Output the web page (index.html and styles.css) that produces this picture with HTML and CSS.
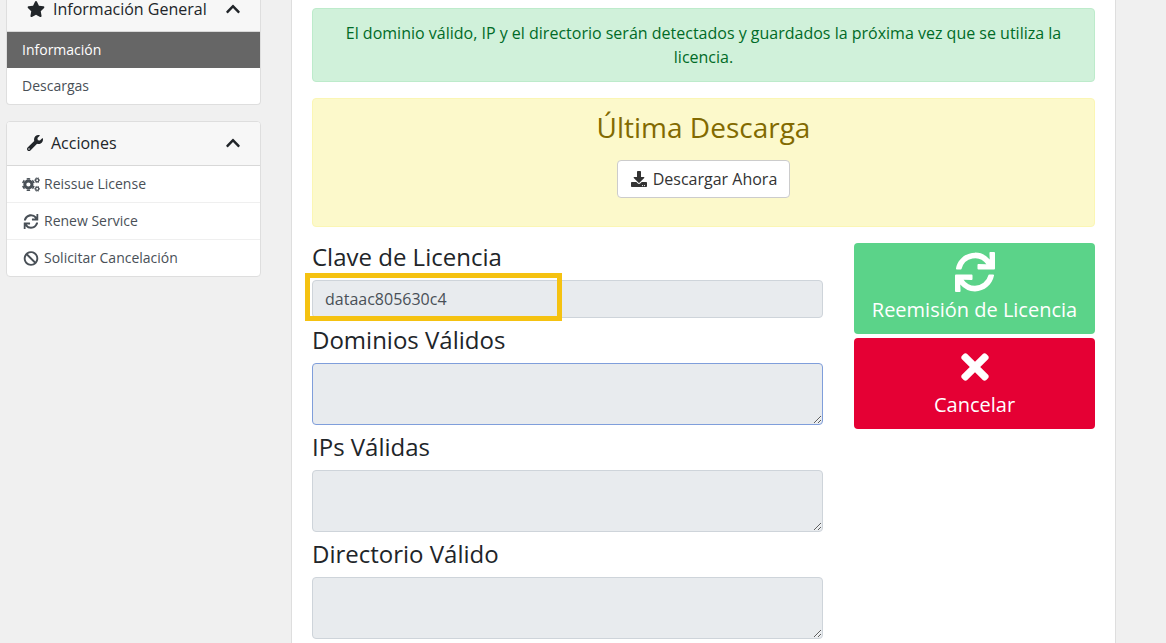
FILE: index.html
```html
<!DOCTYPE html>
<html lang="es">
<head>
<meta charset="utf-8">
<meta name="viewport" content="width=device-width, initial-scale=1">
<title>Información</title>
<link rel="stylesheet" href="styles.css">
</head>
<body>
<svg class="sprite" aria-hidden="true">
  <symbol id="chevron" viewBox="0 0 448 512"><path d="M240.971 130.524l194.343 194.343c9.373 9.373 9.373 24.569 0 33.941l-22.667 22.667c-9.357 9.357-24.522 9.375-33.901.04L224 227.495 69.255 381.516c-9.379 9.335-24.544 9.317-33.901-.04l-22.667-22.667c-9.373-9.373-9.373-24.569 0-33.941L207.03 130.525c9.372-9.373 24.568-9.373 33.941-.001z"/></symbol>
  <symbol id="sync" viewBox="0 0 512 512"><path d="M440.65 12.57l4 82.77A247.16 247.16 0 0 0 255.83 8C134.73 8 33.91 94.92 12.29 209.82A12 12 0 0 0 24.09 224h49.05a12 12 0 0 0 11.67-9.26 175.91 175.91 0 0 1 317-56.94l-101.46-4.86a12 12 0 0 0-12.57 12v47.41a12 12 0 0 0 12 12H500a12 12 0 0 0 12-12V12a12 12 0 0 0-12-12h-47.37a12 12 0 0 0-11.98 12.57zM255.83 432a175.61 175.61 0 0 1-146-77.8l101.8 4.87a12 12 0 0 0 12.57-12v-47.4a12 12 0 0 0-12-12H12a12 12 0 0 0-12 12V500a12 12 0 0 0 12 12h47.35a12 12 0 0 0 12-12.6l-4.15-82.57A247.17 247.17 0 0 0 255.83 504c121.11 0 221.93-86.92 243.55-201.82a12 12 0 0 0-11.8-14.18h-49.05a12 12 0 0 0-11.67 9.26A175.86 175.86 0 0 1 255.83 432z"/></symbol>
</svg>
<div class="layout">
  <aside class="sidebar">
    <nav class="panel panel-top">
      <div class="panel-head">
        <svg class="icon-star" viewBox="0 0 576 512"><path d="M259.3 17.8L194 150.2 47.9 171.5c-26.2 3.8-36.7 36.1-17.7 54.6l105.7 103-25 145.5c-4.5 26.3 23.2 46 46.4 33.7L288 439.6l130.7 68.7c23.2 12.2 50.9-7.4 46.4-33.7l-25-145.5 105.7-103c19-18.5 8.5-50.8-17.7-54.6L382 150.2 316.7 17.8c-11.7-23.6-45.6-23.9-57.4 0z"/></svg>
        <h3>Información General</h3>
        <button class="toggle" type="button" aria-label="Contraer Información General"><svg viewBox="0 0 448 512"><use href="#chevron"/></svg></button>
      </div>
      <a class="item active" href="#informacion">Información</a>
      <a class="item" href="#descargas">Descargas</a>
    </nav>
    <nav class="panel">
      <div class="panel-head">
        <svg class="icon-title" viewBox="0 0 512 512"><path d="M507.73 109.1c-2.24-9.03-13.54-12.09-20.12-5.51l-74.36 74.36-67.88-11.31-11.31-67.88 74.36-74.36c6.62-6.62 3.43-17.9-5.66-20.16-47.38-11.74-99.55.91-136.58 37.93-39.64 39.64-50.55 97.1-34.05 147.2L18.74 402.76c-24.99 24.99-24.99 65.51 0 90.5 24.99 24.99 65.51 24.99 90.5 0l213.21-213.21c50.12 16.71 107.47 5.68 147.37-34.22 37.07-37.07 49.7-89.32 37.91-136.73zM64 472c-13.25 0-24-10.75-24-24 0-13.26 10.75-24 24-24s24 10.74 24 24c0 13.25-10.75 24-24 24z"/></svg>
        <h3>Acciones</h3>
        <button class="toggle" type="button" aria-label="Contraer Acciones"><svg viewBox="0 0 448 512"><use href="#chevron"/></svg></button>
      </div>
      <a class="item" href="#reissue"><svg class="icon-item" viewBox="0 0 18 15"><g fill="none" stroke="currentColor"><circle cx="6.4" cy="7.5" r="3.6" stroke-width="3"/><circle cx="6.4" cy="7.5" r="5.7" stroke-width="1.6" pathLength="12" stroke-dasharray="1.1 0.9" stroke-dashoffset="0.55" transform="rotate(30 6.4 7.5)"/><circle cx="15.2" cy="3.2" r="1.6" stroke-width="1.3"/><circle cx="15.2" cy="3.2" r="2.5" stroke-width="0.9" pathLength="12" stroke-dasharray="1.1 0.9" stroke-dashoffset="0.55"/><circle cx="15.2" cy="11.8" r="1.6" stroke-width="1.3"/><circle cx="15.2" cy="11.8" r="2.5" stroke-width="0.9" pathLength="12" stroke-dasharray="1.1 0.9" stroke-dashoffset="0.55"/></g></svg>Reissue License</a>
      <a class="item" href="#renew"><svg class="icon-item" viewBox="0 0 512 512"><use href="#sync"/></svg>Renew Service</a>
      <a class="item" href="#cancelacion"><svg class="icon-item" viewBox="0 0 512 512"><path d="M256 8C119.034 8 8 119.033 8 256s111.034 248 248 248 248-111.034 248-248S392.967 8 256 8zm130.108 117.892c65.448 65.448 70 165.481 20.677 235.637L150.47 105.216c70.204-49.356 170.226-44.735 235.638 20.676zM125.892 386.108c-65.448-65.448-70-165.481-20.677-235.637L361.53 406.784c-70.203 49.356-170.226 44.736-235.638-20.676z"/></svg>Solicitar Cancelación</a>
    </nav>
  </aside>
  <main class="content">
    <div class="alert alert-success">El dominio válido, IP y el directorio serán detectados y guardados la próxima vez que se utiliza la licencia.</div>
    <section class="alert alert-warning">
      <h2>Última Descarga</h2>
      <button class="btn-download" type="button"><svg class="icon-title" viewBox="0 0 512 512"><path d="M216 0h80c13.3 0 24 10.7 24 24v168h87.7c17.8 0 26.7 21.5 14.1 34.1L269.7 378.3c-7.5 7.5-19.8 7.5-27.3 0L90.1 226.1c-12.6-12.6-3.7-34.1 14.1-34.1H192V24c0-13.3 10.7-24 24-24zm296 376v112c0 13.3-10.7 24-24 24H24c-13.3 0-24-10.7-24-24V376c0-13.3 10.7-24 24-24h146.7l49 49c20.1 20.1 52.5 20.1 72.6 0l49-49H488c13.3 0 24 10.7 24 24zm-124 88c0-11-9-20-20-20s-20 9-20 20 9 20 20 20 20-9 20-20zm64 0c0-11-9-20-20-20s-20 9-20 20 9 20 20 20 20-9 20-20z"/></svg>Descargar Ahora</button>
    </section>
    <div class="license">
      <form class="fields">
        <label for="clave">Clave de Licencia</label>
        <div class="key">
          <input id="clave" class="field" type="text" value="dataac805630c4" readonly>
          <span class="highlight"></span>
        </div>
        <label for="dominios">Dominios Válidos</label>
        <textarea id="dominios" class="field field-current" rows="2" readonly></textarea>
        <label for="ips">IPs Válidas</label>
        <textarea id="ips" class="field" rows="2" readonly></textarea>
        <label for="directorio">Directorio Válido</label>
        <textarea id="directorio" class="field" rows="2" readonly></textarea>
      </form>
      <div class="actions">
        <button class="action reissue" type="button"><svg viewBox="0 0 512 512"><use href="#sync"/></svg>Reemisión de Licencia</button>
        <button class="action cancel" type="button"><svg viewBox="0 0 352 512"><path d="M242.72 256l100.07-100.07c12.28-12.28 12.28-32.19 0-44.48l-22.24-22.24c-12.28-12.28-32.19-12.28-44.48 0L176 189.28 75.93 89.21c-12.28-12.28-32.19-12.28-44.48 0L9.21 111.45c-12.28 12.28-12.28 32.19 0 44.48L109.28 256 9.21 356.07c-12.28 12.28-12.28 32.19 0 44.48l22.24 22.24c12.28 12.28 32.2 12.28 44.48 0L176 322.72l100.07 100.07c12.28 12.28 32.2 12.28 44.48 0l22.24-22.24c12.28-12.28 12.28-32.19 0-44.48L242.72 256z"/></svg>Cancelar</button>
      </div>
    </div>
  </main>
</div>
</body>
</html>
```

FILE: styles.css
```css
* {
  box-sizing: border-box;
}

body {
  margin: 0;
  height: 100vh;
  overflow: hidden;
  background: #f0f0f0;
  color: #212529;
  font: 16px/24px "Open Sans", "Noto Sans", sans-serif;
}

svg {
  display: block;
  flex: none;
  fill: currentColor;
}

.sprite {
  display: none;
}

button,
input,
textarea {
  font: inherit;
}

h2,
h3 {
  margin: 0;
  font-weight: 400;
}

.layout {
  display: grid;
  grid-template-columns: minmax(0, 255fr) minmax(0, 825fr);
  gap: 30px;
  padding: 0 50px 0 6px;
}

/* Sidebar */
.panel {
  margin-bottom: 16px;
  background: #fff;
  border: 1px solid #dedede;
  border-radius: 4px;
}

.panel-top {
  border-top: 0;
  border-radius: 0 0 4px 4px;
}

.panel-head {
  display: flex;
  align-items: center;
  gap: 8px;
  padding: 9px 20px 10px;
  background: #f7f7f7;
  border-bottom: 1px solid #d8d8d8;
  border-radius: 3px 3px 0 0;
}

.panel-top .panel-head {
  padding-top: 0;
  padding-bottom: 13px;
  border-radius: 0;
}

.panel-head h3 {
  flex: 1;
  font-size: 16px;
  line-height: 24px;
}

.panel-top h3 {
  line-height: 18px;
}

.icon-star {
  width: 18px;
  height: 16px;
}

.icon-title {
  width: 16px;
  height: 16px;
}

.toggle {
  padding: 0;
  border: 0;
  background: none;
  color: inherit;
}

.toggle svg {
  width: 14px;
  height: 16px;
}

.item {
  display: flex;
  align-items: center;
  gap: 4px;
  padding: 7px 15px;
  color: #495057;
  font-size: 14px;
  line-height: 22px;
  text-decoration: none;
}

.item + .item {
  border-top: 1px solid #efefef;
}

.panel-top .item + .item {
  border-top: 0;
}

.item.active {
  background: #666;
  color: #fff;
}

.icon-item {
  width: 18px;
  height: 15px;
}

/* Main column */
.content {
  padding: 8px 20px 20px;
  background: #fff;
  border: 1px solid #dedede;
  border-width: 0 1px;
}

.alert {
  margin-bottom: 16px;
  padding: 12px 20px;
  border: 1px solid;
  border-radius: 4px;
  text-align: center;
}

.alert-success {
  background: #d0f1da;
  border-color: #bdebcb;
  color: #006b27;
}

.alert-warning {
  padding-bottom: 28px;
  background: #fcf9cb;
  border-color: #fbf6b4;
  color: #826a00;
}

.alert-warning h2 {
  margin-bottom: 17px;
  font-size: 28px;
  line-height: 32px;
}

.btn-download {
  display: inline-flex;
  align-items: center;
  gap: 6px;
  padding: 6px 12px 6px 13px;
  background: #fff;
  border: 1px solid #ccc;
  border-radius: 4px;
  color: #333;
  vertical-align: top;
}

.license {
  display: grid;
  grid-template-columns: minmax(0, 511fr) minmax(0, 241fr);
  gap: 31px;
}

.fields {
  display: flex;
  flex-direction: column;
  gap: 8px;
}

.fields label {
  padding-bottom: 2px;
  font-size: 24px;
  line-height: 27px;
}

.field {
  display: block;
  width: 100%;
  padding: 6px 12px;
  background: #e8ebee;
  border: 1px solid #ced4da;
  border-radius: 4px;
  outline: 0;
  color: #495057;
}

textarea.field {
  height: 62px;
  resize: vertical;
}

.field-current {
  border-color: #7f9edb;
}

.key {
  position: relative;
}

.highlight {
  position: absolute;
  top: -7px;
  left: -7px;
  width: 257px;
  height: 48px;
  border: 5px solid #f5c211;
  pointer-events: none;
}

.actions {
  display: flex;
  flex-direction: column;
  gap: 4px;
}

.action {
  display: flex;
  flex-direction: column;
  align-items: center;
  gap: 3px;
  padding: 9px 16px;
  border: 0;
  border-radius: 4px;
  color: #fff;
  font-size: 20px;
  line-height: 30px;
}

.action svg {
  width: 40px;
  height: 40px;
}

.reissue {
  background: #5bd389;
}

.cancel {
  background: #e50034;
}
```
